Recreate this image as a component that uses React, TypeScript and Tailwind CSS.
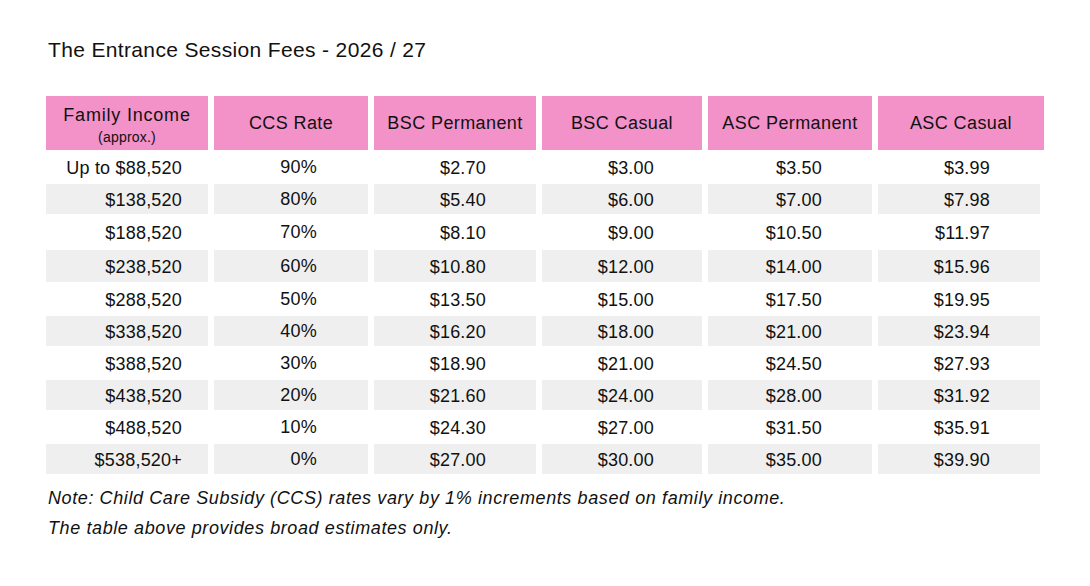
const headers = ["CCS Rate", "BSC Permanent", "BSC Casual", "ASC Permanent", "ASC Casual"];

const rows: string[][] = [
  ["Up to $88,520", "90%", "$2.70", "$3.00", "$3.50", "$3.99"],
  ["$138,520", "80%", "$5.40", "$6.00", "$7.00", "$7.98"],
  ["$188,520", "70%", "$8.10", "$9.00", "$10.50", "$11.97"],
  ["$238,520", "60%", "$10.80", "$12.00", "$14.00", "$15.96"],
  ["$288,520", "50%", "$13.50", "$15.00", "$17.50", "$19.95"],
  ["$338,520", "40%", "$16.20", "$18.00", "$21.00", "$23.94"],
  ["$388,520", "30%", "$18.90", "$21.00", "$24.50", "$27.93"],
  ["$438,520", "20%", "$21.60", "$24.00", "$28.00", "$31.92"],
  ["$488,520", "10%", "$24.30", "$27.00", "$31.50", "$35.91"],
  ["$538,520+", "0%", "$27.00", "$30.00", "$35.00", "$39.90"],
];

// row heights read off the reference
const rowHeights = ["h-[30px]", "h-[30px]", "h-[32px]", "h-[32px]", "h-[30px]", "h-[30px]", "h-[30px]", "h-[30px]", "h-[30px]", "h-[30px]"];

const headWidths = ["w-[162px]", "w-[154px]", "w-[162px]", "w-[160px]", "w-[164px]", "w-[166px]"];
const cellWidths = ["w-[162px]", "w-[154px]", "w-[162px]", "w-[160px]", "w-[164px]", "w-[162px]"];
const cellPad = ["pr-[26px]", "pr-[51px]", "pr-[50px]", "pr-[48px]", "pr-[50px]", "pr-[50px]"];

export default function App() {
  return (
    <div className="h-[586px] w-[1090px] bg-white text-[#111] font-['Liberation_Sans',Arial,sans-serif]">
      <div className="pl-[48px] pt-[38px]">
        <h1 className="text-[21px] leading-[24px] tracking-[0.35px]">The Entrance Session Fees - 2026 / 27</h1>
      </div>

      <div className="ml-[46px] mt-[34px] flex flex-col gap-[2px]">
        <div className="flex gap-[6px]">
          <div className={`${headWidths[0]} flex h-[54px] flex-col items-center justify-center bg-[#f292c9] pt-[2px]`}>
            <span className="text-[18px] leading-[22px] tracking-[0.8px]">Family Income</span>
            <span className="mt-[3px] text-[14px] leading-[16px] tracking-[0.2px]">(approx.)</span>
          </div>
          {headers.map((h, i) => (
            <div
              key={h}
              className={`${headWidths[i + 1]} flex h-[54px] items-center justify-center bg-[#f292c9] text-[18px] tracking-[0.4px]`}
            >
              {h}
            </div>
          ))}
        </div>

        {rows.map((row, r) => (
          <div key={row[0]} className="flex gap-[6px]">
            {row.map((cell, c) => (
              <div
                key={c}
                className={`${cellWidths[c]} ${rowHeights[r]} ${cellPad[c]} ${r % 2 === 1 ? "bg-[#efefef]" : ""} flex items-center justify-end pt-[2px] text-[18px] tracking-[0.2px] ${c === 1 ? "pb-[2px] pt-0" : ""}`}
              >
                {cell}
              </div>
            ))}
          </div>
        ))}
      </div>

      <div className="ml-[48px] mt-[9px] text-[18px] italic leading-[30px] tracking-[0.6px]">
        <p>Note: Child Care Subsidy (CCS) rates vary by 1% increments based on family income.</p>
        <p>The table above provides broad estimates only.</p>
      </div>
    </div>
  );
}
